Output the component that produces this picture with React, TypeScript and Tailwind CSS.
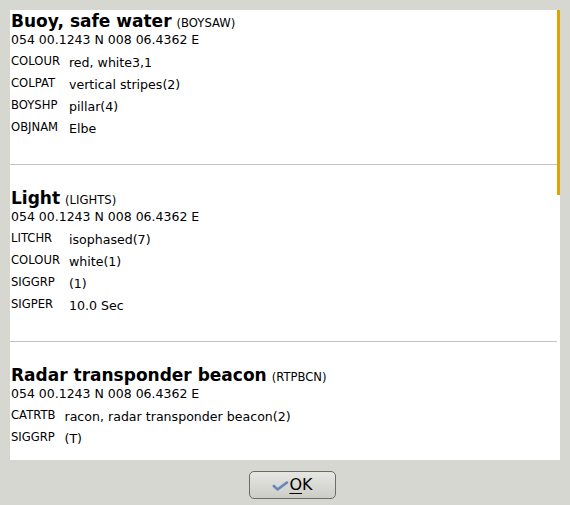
import React from "react";

type Section = { title: string; code: string; rows: [string, string][] };

const sections: Section[] = [
  {
    title: "Buoy, safe water",
    code: "BOYSAW",
    rows: [
      ["COLOUR", "red, white3,1"],
      ["COLPAT", "vertical stripes(2)"],
      ["BOYSHP", "pillar(4)"],
      ["OBJNAM", "Elbe"],
    ],
  },
  {
    title: "Light",
    code: "LIGHTS",
    rows: [
      ["LITCHR", "isophased(7)"],
      ["COLOUR", "white(1)"],
      ["SIGGRP", "(1)"],
      ["SIGPER", "10.0 Sec"],
    ],
  },
  {
    title: "Radar transponder beacon",
    code: "RTPBCN",
    rows: [
      ["CATRTB", "racon, radar transponder beacon(2)"],
      ["SIGGRP", "(T)"],
    ],
  },
];

function Block({ s, first }: { s: Section; first: boolean }) {
  return (
    <div className={first ? "h-[154px] pl-[1px]" : "h-[177px] pl-[1px] pt-[22px] border-t border-[#c3c3c3]"}>
      <div className="flex items-baseline h-[22px]">
        <span className="text-[17px] font-bold text-black leading-[22px]">{s.title}</span>
        <span className="text-[11.6px] text-black ml-[5px]">({s.code})</span>
      </div>
      <div className="text-[12.5px] leading-[15px] text-black">054 00.1243 N 008 06.4362 E</div>
      <div className="mt-[5px] grid grid-cols-[auto_1fr] gap-x-[9px] auto-rows-[22px] items-center">
        {s.rows.map(([k, v], i) => (
          <React.Fragment key={i}>
            <span className="text-[11.6px] text-black -translate-y-[1px]">{k}</span>
            <span className="text-[12.6px] text-black">{v}</span>
          </React.Fragment>
        ))}
      </div>
    </div>
  );
}

export default function App() {
  return (
    <div
      className="w-[570px] h-[505px] bg-[#d6d7d1] flex flex-col"
      style={{ fontFamily: '"DejaVu Sans", sans-serif' }}
    >
      <div className="mt-[10px] mx-[10px] h-[450px] bg-white relative overflow-hidden">
        <div className="absolute right-0 top-0 w-[3px] h-[185px] bg-[#e0a400]" />
        <div className="pr-[3px]">
          {sections.map((s, i) => (
            <Block key={i} s={s} first={i === 0} />
          ))}
        </div>
      </div>
      <div className="flex justify-center pt-[11px] pl-[15px]">
        <button className="w-[87px] h-[28px] rounded-[5px] border border-[#6b6b68] bg-gradient-to-b from-[#e6e6e2] to-[#cdcdc8] flex items-center justify-center gap-[0px] text-[16px] text-black">
          <svg width="17" height="10" viewBox="0 0 17 10" className="mt-[2px]">
            <path d="M1.8 5 L5.5 8.4 L15 1.6" fill="none" stroke="#c8d2e0" strokeWidth="3.8" strokeLinecap="round" strokeLinejoin="round" />
            <path d="M1.8 5 L5.5 8.4 L15 1.6" fill="none" stroke="#6a85ae" strokeWidth="2.4" strokeLinecap="round" strokeLinejoin="round" />
          </svg>
          <span className="leading-none">
            <span className="underline underline-offset-[3px] decoration-1">O</span>K
          </span>
        </button>
      </div>
    </div>
  );
}
